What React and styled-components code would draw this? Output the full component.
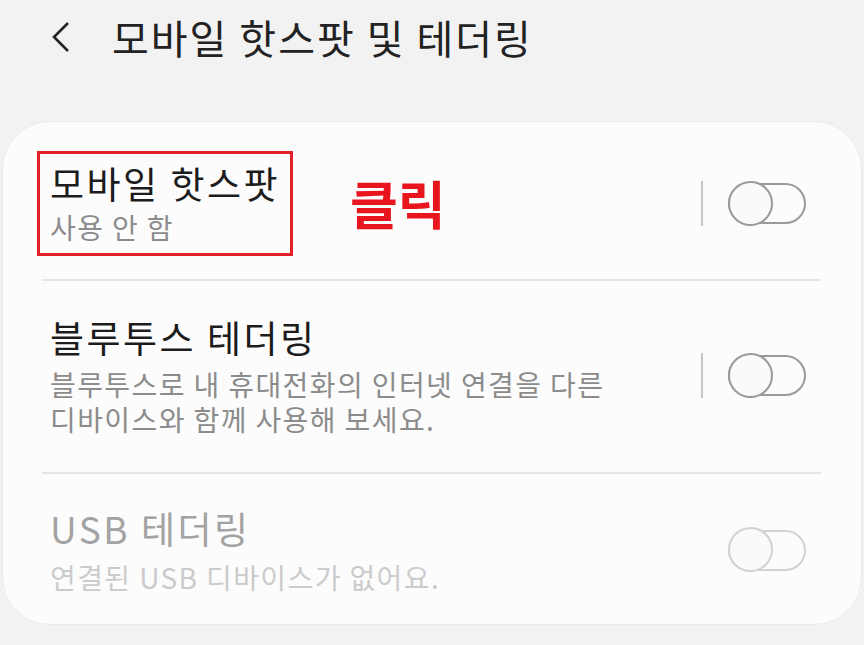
import React from 'react';
import styled, { createGlobalStyle } from 'styled-components';

const GlobalStyle = createGlobalStyle`
  html, body {
    margin: 0;
    padding: 0;
    background: #f2f2f2;
  }
  body {
    font-family: "Noto Sans CJK KR", "Noto Sans", sans-serif;
    width: 864px;
    height: 645px;
    overflow: hidden;
  }
`;

const Page = styled.div`
  width: 864px;
  height: 645px;
  background: #f2f2f2;
`;

const Header = styled.div`
  height: 121px;
  display: flex;
  align-items: flex-start;
  padding: 12px 0 0 50px;
  box-sizing: border-box;
  gap: 40px;
`;

const BackButton = styled.div`
  width: 22px;
  height: 50px;
  display: flex;
  align-items: center;
`;

const HeaderTitle = styled.h1`
  margin: 0;
  font-size: 40px;
  font-weight: 400;
  line-height: 50px;
  letter-spacing: 2px;
  color: #222;
`;

const Card = styled.div`
  margin: 0 2px;
  height: 504px;
  background: #fcfcfc;
  border: 1px solid #ebebeb;
  border-radius: 48px;
  box-sizing: border-box;
  padding: 0 40px 0 39px;
  display: flex;
  flex-direction: column;
`;

const Row = styled.div`
  display: flex;
  align-items: center;
  padding: ${(p) => p.$pad};
  border-bottom: ${(p) => (p.$last ? 'none' : '2px solid #e6e6e6')};
`;

const TextBlock = styled.div`
  display: flex;
  flex-direction: column;
  padding: ${(p) => (p.$marked ? '6px 10px 8px 10px' : '0 0 0 8px')};
  margin-left: ${(p) => (p.$marked ? '-5px' : '0')};
  border: ${(p) => (p.$marked ? '3px solid #e3202a' : 'none')};
`;

const Title = styled.div`
  font-size: 37px;
  line-height: 46px;
  letter-spacing: 2.5px;
  color: ${(p) => (p.$disabled ? '#a3a3a3' : '#1c1c1c')};
`;

const Subtitle = styled.div`
  font-size: 28px;
  line-height: 35px;
  letter-spacing: 1.4px;
  margin-top: ${(p) => p.$gap || '4px'};
  color: ${(p) => (p.$disabled ? '#cbcbcb' : '#8c8c8c')};
`;

const Note = styled.div`
  font-size: 52px;
  font-weight: 700;
  color: #e8141e;
  margin-left: 57px;
  margin-top: -2px;
`;

const Spacer = styled.div`
  flex: 1;
`;

const Separator = styled.div`
  width: 2px;
  height: 45px;
  background: ${(p) => (p.$hidden ? 'transparent' : '#c4c4c4')};
  margin-right: 25px;
`;

const ToggleTrack = styled.div`
  position: relative;
  width: 78px;
  height: 41px;
  box-sizing: border-box;
  border: 2.5px solid ${(p) => (p.$disabled ? '#d2d2d2' : '#9a9a9a')};
  border-radius: 21px;
  margin-right: 15px;
`;

const ToggleKnob = styled.div`
  position: absolute;
  left: -2.5px;
  top: -4.5px;
  width: 45px;
  height: 45px;
  box-sizing: border-box;
  border-radius: 50%;
  border: 2.5px solid ${(p) => (p.$disabled ? '#d2d2d2' : '#9a9a9a')};
  background: #fafafa;
`;

const Toggle = ({ disabled }) => (
  <ToggleTrack $disabled={disabled}>
    <ToggleKnob $disabled={disabled} />
  </ToggleTrack>
);

const App = () => (
  <Page>
    <GlobalStyle />
    <Header>
      <BackButton>
        <svg width="22" height="34" viewBox="0 0 22 34">
          <polyline points="18,3 4,17 18,31" fill="none" stroke="#222" strokeWidth="2.6" />
        </svg>
      </BackButton>
      <HeaderTitle>모바일 핫스팟 및 테더링</HeaderTitle>
    </Header>
    <Card>
      <Row $pad="29px 0 23px 0">
        <TextBlock $marked>
          <Title>모바일 핫스팟</Title>
          <Subtitle>사용 안 함</Subtitle>
        </TextBlock>
        <Note>클릭</Note>
        <Spacer />
        <Separator />
        <Toggle />
      </Row>
      <Row $pad="33px 0 35px 0">
        <TextBlock>
          <Title>블루투스 테더링</Title>
          <Subtitle $gap="7px">
            블루투스로 내 휴대전화의 인터넷 연결을 다른
            <br />
            디바이스와 함께 사용해 보세요.
          </Subtitle>
        </TextBlock>
        <Spacer />
        <Separator />
        <Toggle />
      </Row>
      <Row $pad="31px 0 0 0" $last>
        <TextBlock>
          <Title $disabled>USB 테더링</Title>
          <Subtitle $disabled $gap="9px">연결된 USB 디바이스가 없어요.</Subtitle>
        </TextBlock>
        <Spacer />
        <Separator $hidden />
        <Toggle disabled />
      </Row>
    </Card>
  </Page>
);

export default App;
